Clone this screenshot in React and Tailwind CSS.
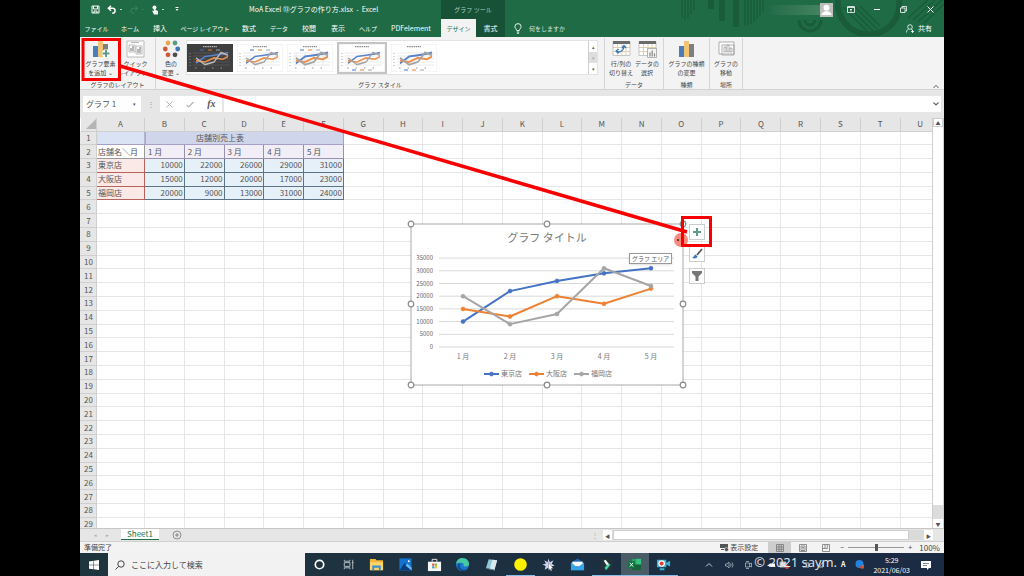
import React from 'react';

const JP = "font-['Noto_Sans_CJK_JP',sans-serif]";
const MONTHS = ['1 月', '2 月', '3 月', '4 月', '5 月'];
const SHOPS = [
    { name: '東京店', color: '#4472c4', values: [10000, 22000, 26000, 29000, 31000] },
    { name: '大阪店', color: '#ed8133', values: [15000, 12000, 20000, 17000, 23000] },
    { name: '福岡店', color: '#a5a5a5', values: [20000, 9000, 13000, 31000, 24000] },
];
const COLUMNS = 'ABCDEFGHIJKLMNOPQRSTU'.split('');
const EMPTY_ROWS = Array.from({ length: 24 }, (_, i) => i + 6);

const TABS = [
    { label: 'ファイル', cls: 'w-[33px] text-[6px]' },
    { label: 'ホーム', cls: 'w-[34px] text-[6px]' },
    { label: '挿入', cls: 'w-[26px] text-[7px]' },
    { label: 'ページ レイアウト', cls: 'w-[64px] text-[6px]' },
    { label: '数式', cls: 'w-[24px] text-[7px]' },
    { label: 'データ', cls: 'w-[36px] text-[6px]' },
    { label: '校閲', cls: 'w-[24px] text-[7px]' },
    { label: '表示', cls: 'w-[34px] text-[7px]' },
    { label: 'ヘルプ', cls: 'w-[26px] text-[6px]' },
    { label: 'PDFelement', cls: 'w-[60px] text-[7px]' },
];

const Decoration = () => (
    <svg className="absolute right-0 top-0 h-9 w-[264px]" viewBox="0 0 264 36" fill="none" stroke="#1a5c3a" aria-hidden="true">
        <g strokeWidth="1.4">
            <path d="M2 0v18M5 0v20M8 0v18M11 0v14M14 0v10M65 0v26M68 0v26M71 0v24M74 0v22M77 0v19M80 0v16M83 0v12" />
        </g>
        <g strokeWidth="6">
            <path d="M42 0v21M56 0v27M31 0v9" />
            <path d="M158 0a31 31 0 0 0 54 24a31 31 0 0 0 7-24" />
        </g>
        <path d="M119 20a11 11 0 0 0 22 0M125 20a5 5 0 0 0 10 0" strokeWidth="3" />
        <path d="M163 7l25 25M168 6l25 25M174 6l23 23M180 6l20 20M228 18l20-18M233 20l22-20M238 22l24-22M243 24l21-20" strokeWidth="1.6" />
    </svg>
);

const QuickIcons = () => (
    <div className="flex w-[106px] items-center gap-[7px] pl-[11px] text-white">
        <button aria-label="保存">
            <svg className="h-[9px] w-[9px]" viewBox="0 0 9 9" fill="none" stroke="currentColor"><path d="M1 1h7v7H1zM2.500 1v3h4V1M3 8V6h3v2" /></svg>
        </button>
        <button aria-label="元に戻す">
            <svg className="h-[9px] w-[16px]" viewBox="0 0 16 9" fill="none" stroke="currentColor"><path d="M4 .8L1.300 3.300L4 5.800M1.500 3.300h4.200a2.400 2.400 0 0 1 0 4.800H5" strokeWidth="1.400" /><path d="M13 4l1 1 1-1" strokeWidth=".7" /></svg>
        </button>
        <button aria-label="やり直し" className="text-[#3e8560]">
            <svg className="h-[9px] w-[14px]" viewBox="0 0 14 9" fill="none" stroke="currentColor"><path d="M5 .8l2.700 2.500L5 5.800M7.500 3.300H3.300a2.400 2.400 0 0 0 0 4.800H4" /><path d="M12 4l1 1 1-1" strokeWidth=".7" /></svg>
        </button>
        <button aria-label="タッチ/マウス モードの切り替え">
            <svg className="h-[10px] w-[16px]" viewBox="0 0 16 10"><circle cx="3.500" cy="2.500" r="2" fill="currentColor" /><path d="M3 2v4L1 5.500 3 9.500h4V6L4.500 5V2z" fill="currentColor" /><path d="M11 4l1 1 1-1" fill="none" stroke="currentColor" strokeWidth=".7" /></svg>
        </button>
        <button aria-label="カスタマイズ" className="flex">
            <svg className="h-[5px] w-[6px]" viewBox="0 0 6 5"><path d="M1.500 0h3v1h-3zM1.500 2h3L3 4z" fill="currentColor" /></svg>
        </button>
    </div>
);

const TitleBar = () => (
    <div className="flex h-[19px] items-stretch">
        <QuickIcons />
        <div className="w-[255px] pl-[63px] pt-[4px] text-[7px] leading-[11px] text-white whitespace-nowrap">MoA Excel ⑬グラフの作り方.xlsx&nbsp; -&nbsp; Excel</div>
        <div className="w-[64px] bg-[#175236] text-center text-[6px] leading-[19px] text-[#b5cfc0]">グラフ ツール</div>
        <div className="relative flex flex-1 items-center justify-end text-white">
            <div className="h-[10px] w-[49px] bg-gradient-to-r from-[#256c4b] to-[#43835f]" />
            <svg className="mr-[14px] h-[14px] w-[13px]" viewBox="0 0 13 14" aria-label="アカウント"><path fill="#bcc0bd" d="M0 0h13v14H0z" /><circle cx="6.500" cy="4.800" r="3" fill="#fff" /><path d="M1.500 12c0-5 10-5 10 0z" fill="#fff" /></svg>
            <button aria-label="リボンの表示オプション" className="mr-[19px]">
                <svg className="h-[7px] w-[8px]" viewBox="0 0 8 7" fill="none" stroke="currentColor" strokeWidth=".8"><path d="M.5.5h7v6h-7zM.5 1.500h7M4 5.500V3M3 4l1-1 1 1" /></svg>
            </button>
            <button aria-label="最小化" className="mr-[20px] h-px w-[6px] bg-white" />
            <button aria-label="元のサイズに戻す" className="mr-[20px]">
                <svg className="h-[7px] w-[7px]" viewBox="0 0 7 7" fill="none" stroke="currentColor" strokeWidth=".8"><path d="M.5 2h4.500v4.500H.5zM2 2V.5h4.500V5H5" /></svg>
            </button>
            <button aria-label="閉じる" className="mr-[10px]">
                <svg className="h-[7px] w-[7px]" viewBox="0 0 7 7" stroke="currentColor"><path d="M.5.5l6 6M6.500.5l-6 6" /></svg>
            </button>
        </div>
    </div>
);

const TabBar = () => (
    <div className="flex h-[18px] items-stretch text-white whitespace-nowrap">
        {TABS.map((tab) => (
            <button key={tab.label} className={`${tab.cls} text-center`}>{tab.label}</button>
        ))}
        <button className="w-[35px] bg-[#f3f3f3] text-[6px] text-[#217346]">デザイン</button>
        <button className="w-[29px] bg-[#175236] text-[7px]">書式</button>
        <div className="relative flex flex-1 items-center">
            <svg className="ml-[9px] h-[11px] w-[8px]" viewBox="0 0 8 11" fill="none" stroke="currentColor" strokeWidth=".9"><path d="M2.700 7.500C2.700 6 .9 5.500.9 3.700a3.100 3.100 0 0 1 6.200 0C7.100 5.500 5.300 6 5.300 7.500zM2.700 9h2.600M3 10.300h2" /></svg>
            <button className="ml-[7px] text-[6px] text-[#d5e5dc]">何をしますか</button>
            <button className="ml-auto mr-3 flex items-center gap-[4px] text-[7px]">
                <svg className="h-[9px] w-[8px]" viewBox="0 0 8 9" fill="none" stroke="currentColor" strokeWidth=".8"><circle cx="4" cy="3" r="2.300" /><path d="M.5 8.500c0-2 1-3 2-3.400M5.500 5l1 1.500M5 7.500h3M6.500 6v3" /></svg>
                共有
            </button>
        </div>
    </div>
);

const Thumb = ({ dark, selected, markers, wide }) => {
    const grid = dark ? '#636363' : '#dcdcdc';
    const lines = [
        ['#5b83c9', '9,18 18,13 27,12 36,11 41,10'],
        ['#ed8f4d', '9,16 18,17 27,14 36,15 41,13'],
        [dark ? '#bbb' : '#a5a5a5', '9,14 18,19 27,17 34,10 41,12'],
    ];
    return (
        <button aria-label="グラフ スタイル" className={selected ? 'border-2 border-[#c4c4c4]' : ''}>
            <svg className="h-[28px] w-[46px]" viewBox="0 0 46 28" fill="none">
                <path fill={dark ? '#3f3f3f' : '#fff'} stroke={dark ? '#3f3f3f' : '#e3e3e3'} strokeWidth=".7" d="M0 0h46v28H0z" />
                <path d="M16 2.700h14" stroke={dark ? '#bbb' : '#888'} strokeWidth="1.200" strokeDasharray="1.500 .7" />
                <path d="M6 9h37M6 12h37M6 15h37M6 18h37M6 21h37" stroke={grid} strokeWidth=".6" />
                {markers && <path d="M9 9v12M18 9v12M27 9v12M36 9v12" stroke={grid} strokeWidth=".6" />}
                <path d="M3 9v13" stroke="#999" strokeWidth="1.200" strokeDasharray=".8 2.200" />
                <path d="M8 24h34" stroke="#999" strokeDasharray="1.500 7" />
                {lines.map(([color, points]) => (
                    <polyline key={color} points={points} stroke={color} strokeWidth={wide || markers ? 1.5 : 1.2} transform="translate(0 -5) scale(1 1.35)" />
                ))}
                <path d={selected || wide ? 'M13 26h4' : 'M13 6h4'} stroke="#4472c4" />
                <path d={selected || wide ? 'M21 26h4' : 'M21 6h4'} stroke="#ed7d31" />
                <path d={selected || wide ? 'M29 26h4' : 'M29 6h4'} stroke="#a5a5a5" />
            </svg>
        </button>
    );
};

const BarsIcon = ({ plus }) => (
    <svg className="h-[18px] w-[19px]" viewBox="0 0 19 18">
        <path fill="#4a7ebb" d="M2 6h5v11H2z" />
        <path fill="#f0c674" d="M7 1h5v16H7z" />
        <path fill="#7f7f7f" d={plus ? 'M12 4h5v6h-5z' : 'M12 4h5v13h-5z'} />
        {plus && <path d="M11 13.500h8M15 9.500v8" stroke="#fff" strokeWidth="4" />}
        {plus && <path d="M11.500 13.500h7M15 10v7" stroke="#5c9c85" strokeWidth="1.900" />}
    </svg>
);

const SheetIcon = ({ select }) => (
    <svg className="h-[18px] w-[19px]" viewBox="0 0 19 18" fill="none">
        <path fill="#fff" stroke="#b0b0b0" strokeWidth=".7" d="M1 1.500h17v14H1z" />
        <path fill="#6b6b6b" d="M1 1h17v3H1z" />
        <path d="M1 7.500h17M1 11.500h17M5.500 4v11.500M10 4v11.500M14 4v11.500" stroke="#d9c69b" strokeWidth=".8" />
        {select ? (
            <g><path fill="#f3f3f3" stroke="#999" strokeWidth=".7" d="M9.500 8.500h9v9h-9z" /><path d="M12 16.500v-4M14.200 16.500v-6M16.500 16.500v-3" stroke="#888" strokeWidth="1.200" /></g>
        ) : (
            <path d="M5 11.500c3 1.500 7-1 7-5.500M3.700 11l3-1.800M4 11.200l2.500 2M10 8l2-2.400L14 8" stroke="#3576b9" strokeWidth="1.300" />
        )}
    </svg>
);

const MoveIcon = () => (
    <svg className="h-[18px] w-[19px]" viewBox="0 0 19 18" fill="#fff" stroke="#999" strokeWidth=".8">
        <path d="M2 2h15v12H2zM5 5h12v10H5z" /><path d="M7 12V7h2v5zM10 12V5h2v7zM13 12V8h2v4z" />
    </svg>
);

const LayoutIcon = () => (
    <svg className="h-[18px] w-[19px]" viewBox="0 0 19 18" fill="#fff" stroke="#aaa" strokeWidth=".8">
        <path d="M1 1h17v16H1z" /><path d="M5 2.500h8M3 5h6v7H3zM10 6h6v8h-6z" /><path d="M5 11V8M7 11V6M12 13V9M14 13V7" stroke="#888" strokeWidth="1.200" />
    </svg>
);

const PaletteIcon = () => (
    <svg className="h-[18px] w-[19px]" viewBox="0 0 19 18">
        <circle cx="6" cy="3" r="2.400" fill="#e8a94c" /><circle cx="13" cy="3" r="2.400" fill="#5c9c85" /><circle cx="3.300" cy="9" r="2.400" fill="#d05a35" />
        <circle cx="15.700" cy="9" r="2.400" fill="#3b78b5" /><circle cx="6" cy="14.800" r="2.400" fill="#d05a35" /><circle cx="13" cy="14.800" r="2.400" fill="#4d4d4d" />
    </svg>
);

const Tool = ({ icon, top, bottom, cls }) => (
    <button className={`${cls} flex flex-col items-center text-center`}>
        {icon}
        <span className="mt-[1px] block text-[6px] leading-[9px] whitespace-nowrap">{top}<br />{bottom}</span>
    </button>
);

const Group = ({ label, cls, children }) => (
    <section className={`${cls} flex h-[51px] flex-col justify-between border-r border-[#d5d5d5]`}>
        <div className="flex items-start justify-center pt-[2px]">{children}</div>
        <div className="text-center text-[6px] leading-[9px]">{label}</div>
    </section>
);

const Ribbon = () => (
    <div className="flex h-[53px] items-start border-b border-[#d2d2d2] bg-[#f3f3f3] pt-[1px] text-[#444]">
        <Group label="グラフのレイアウト" cls="w-[76px]">
            <Tool icon={<BarsIcon plus />} top="グラフ要素" bottom="を追加 ⌄" cls="w-[36px]" />
            <Tool icon={<LayoutIcon />} top="クイック" bottom="レイアウト ⌄" cls="w-[34px]" />
        </Group>
        <Group label="グラフ スタイル" cls="flex-1">
            <Tool icon={<PaletteIcon />} top="色の" bottom="変更 ⌄" cls="w-[30px]" />
            <div className="flex h-[35px] flex-1 items-center gap-[4px] border border-[#e3e3e3] bg-white">
                <Thumb dark />
                <Thumb />
                <Thumb markers />
                <Thumb selected />
                <Thumb wide />
                <div className="ml-auto grid h-full w-[9px] grid-rows-3 border-l border-[#d0d0d0] text-[5px] leading-none text-[#666]">
                    <button aria-label="上へ">▴</button>
                    <button aria-label="下へ" className="bg-[#dedede] text-[#aaa]">▾</button>
                    <button aria-label="その他">▾</button>
                </div>
            </div>
            <div className="w-[6px]" />
        </Group>
        <Group label="データ" cls="w-[59px]">
            <Tool icon={<SheetIcon />} top="行/列の" bottom="切り替え" cls="w-[26px]" />
            <Tool icon={<SheetIcon select />} top="データの" bottom="選択" cls="w-[26px]" />
        </Group>
        <Group label="種類" cls="w-[46px]">
            <Tool icon={<BarsIcon />} top="グラフの種類" bottom="の変更" cls="w-[40px]" />
        </Group>
        <Group label="場所" cls="w-[33px]">
            <Tool icon={<MoveIcon />} top="グラフの" bottom="移動" cls="w-[30px]" />
        </Group>
        <div className="flex h-[51px] w-[201px] items-end justify-end pr-[5px]">
            <button aria-label="リボンを折りたたむ">
                <svg className="h-[5px] w-[6px]" viewBox="0 0 6 5" fill="none" stroke="#666"><path d="M.5 4L3 1.200 5.500 4" /></svg>
            </button>
        </div>
    </div>
);

const FormulaBar = () => (
    <div className="flex h-[28px] items-start pt-[6px] pl-[3px] pr-[3px] text-[#555]">
        <div className="flex h-[16px] w-[58px] items-center bg-white">
            <input aria-label="名前ボックス" defaultValue="グラフ 1" className="w-[50px] bg-transparent pl-[3px] text-[8px] leading-[12px] outline-none" />
            <button aria-label="名前の一覧" className="text-[5px]">▾</button>
        </div>
        <div className="w-[19px] text-center text-[8px] leading-[15px] text-[#999]">⋮</div>
        <div className="flex h-[16px] w-[62px] items-center justify-around bg-white">
            <button aria-label="キャンセル"><svg className="h-[7px] w-[7px]" viewBox="0 0 7 7" stroke="#b5b5b5"><path d="M.5.5l6 6M6.500.5l-6 6" /></svg></button>
            <button aria-label="入力"><svg className="h-[7px] w-[8px]" viewBox="0 0 8 7" fill="none" stroke="#b5b5b5" strokeWidth="1.200"><path d="M.5 4l2.200 2L7.500 1" /></svg></button>
            <button className="font-['Liberation_Serif',serif] text-[10px] font-bold italic leading-none">fx</button>
        </div>
        <div className="ml-[2px] flex h-[16px] flex-1 items-center bg-white pr-[2px]">
            <input aria-label="数式バー" className="min-w-0 flex-1 bg-transparent text-[8px] outline-none" />
            <button aria-label="数式バーの展開"><svg className="h-[4px] w-[6px]" viewBox="0 0 6 4" fill="none" stroke="#666" strokeWidth="1.200"><path d="M.5.5L3 3 5.500.5" /></svg></button>
        </div>
    </div>
);

const RowHead = ({ n }) => (
    <th scope="row" className="border border-[#cfcfcf] border-l-[#e6e6e6] bg-[#e6e6e6] p-0 font-normal text-[#555]">{n}</th>
);

const Sheet = () => (
    <table className="h-[414px] w-[101%] table-fixed border-collapse text-[8px] leading-[10px] text-[#555] whitespace-nowrap">
        <colgroup>
            <col className="w-[16px]" />
            <col className="w-[48px]" />
            {COLUMNS.slice(1).map((c) => <col key={c} />)}
        </colgroup>
        <thead>
            <tr className="h-[13px] bg-[#e6e6e6]">
                <th className="p-0" aria-label="すべて選択"><svg className="ml-[5px] h-[10px] w-[10px]" viewBox="0 0 10 10"><path d="M10 0v10H0z" fill="#b5b5b5" /></svg></th>
                {COLUMNS.map((c) => (
                    <th key={c} scope="col" className="border-x border-b border-[#cfcfcf] p-0 font-normal">{c}</th>
                ))}
            </tr>
        </thead>
        <tbody>
            <tr>
                <RowHead n={1} />
                <td colSpan={6} className="border border-[#a79fc4] bg-[linear-gradient(to_right,#dae3f3_47px,#8c7fb0_47px,#8c7fb0_48px,#cfd5ea_48px)] p-0 text-center">店舗別売上表</td>
                {COLUMNS.slice(6).map((c) => <td key={c} className="border border-[#e6e6e6] p-0" />)}
            </tr>
            <tr>
                <RowHead n={2} />
                <td className="border border-[#999] bg-white p-0 pl-px">店舗名＼月</td>
                {MONTHS.map((m) => <td key={m} className="border border-[#9a8fac] bg-[#f2eef8] p-0 pl-[3px]">{m}</td>)}
                {COLUMNS.slice(6).map((c) => <td key={c} className="border border-[#e6e6e6] p-0" />)}
            </tr>
            {SHOPS.map((shop, i) => (
                <tr key={shop.name}>
                    <RowHead n={i + 3} />
                    <td className="border border-[#b5645c] bg-[#fbe9e7] p-0 pl-px">{shop.name}</td>
                    {shop.values.map((v) => <td key={v} className="border border-[#5c7388] bg-[#e6f0f8] p-0 pr-px text-right">{v}</td>)}
                    {COLUMNS.slice(6).map((c) => <td key={c} className="border border-[#e6e6e6] p-0" />)}
                </tr>
            ))}
            {EMPTY_ROWS.map((n) => (
                <tr key={n}>
                    <RowHead n={n} />
                    {COLUMNS.map((c) => <td key={c} className="border border-[#e6e6e6] p-0" />)}
                </tr>
            ))}
        </tbody>
    </table>
);

const px = (i) => 52 + i * 47;
const py = (v) => 123 - (v / 5000) * 12.7;

const Chart = () => (
    <svg className="absolute left-[327px] top-[102px] h-[169px] w-[280px]" viewBox="-4 -4 280 169" fill="none" role="img" aria-label="グラフ タイトル">
        <path d="M0 0h272v161H0z" fill="#fff" stroke="#a8a8a8" />
        <text x="136" y="18" textAnchor="middle" fontSize="11" fill="#777">グラフ タイトル</text>
        {[0, 5000, 10000, 15000, 20000, 25000, 30000, 35000].map((v) => (
            <g key={v}>
                <path d={`M28 ${py(v)}h235`} stroke="#d9d9d9" />
                <text x="22" y={py(v) + 2} textAnchor="end" fontSize="6" fill="#666">{v}</text>
            </g>
        ))}
        {MONTHS.map((m, i) => <text key={m} x={px(i)} y="135" textAnchor="middle" fontSize="7" fill="#777">{m}</text>)}
        {SHOPS.map((shop, s) => (
            <g key={shop.name} stroke={shop.color} fill={shop.color}>
                <polyline points={shop.values.map((v, i) => `${px(i)},${py(v)}`).join(' ')} fill="none" strokeWidth="2" strokeLinejoin="round" />
                {shop.values.map((v, i) => <circle key={v} cx={px(i)} cy={py(v)} r="2" strokeWidth=".6" />)}
                <path d={`M${73 + s * 45} 150h15`} strokeWidth="2" />
                <circle cx={80.5 + s * 45} cy="150" r="2" strokeWidth=".6" />
                <text x={90 + s * 45} y="152" fontSize="7" stroke="none" fill="#777">{shop.name}</text>
            </g>
        ))}
        {[[0, 0], [136, 0], [272, 0], [0, 80], [272, 80], [0, 161], [136, 161], [272, 161]].map(([x, y]) => (
            <circle key={`${x}-${y}`} cx={x} cy={y} r="2.800" fill="#fff" stroke="#8a8a8a" strokeWidth="1.200" />
        ))}
    </svg>
);

const ChartButtons = () => (
    <div className="absolute left-[609px] top-[106px] flex flex-col gap-[6px]">
        <button aria-label="グラフ要素" className="h-[16px] w-[16px] border border-[#ccc] bg-white"><svg viewBox="0 0 14 14"><path d="M3 7h8M7 3v8" stroke="#5c9c85" strokeWidth="2" /></svg></button>
        <button aria-label="グラフ スタイル" className="h-[16px] w-[16px] border border-[#ccc] bg-white"><svg viewBox="0 0 14 14"><path d="M12 2L7 8" stroke="#555" strokeWidth="1.800" /><path d="M7.500 9.500L5.500 7.500C4 8 4.500 10 2 11c3 1 5.500 0 5.500-1.500z" fill="#3b78b5" /></svg></button>
        <button aria-label="グラフ フィルター" className="h-[16px] w-[16px] border border-[#ccc] bg-white"><svg viewBox="0 0 14 14"><path d="M2 2h10v2L8.500 7.500V12h-3V7.500L2 4z" fill="#777" /></svg></button>
    </div>
);

const Workspace = () => (
    <div className="flex min-h-0 flex-1 bg-[#e6e6e6]">
        <div className="relative min-w-0 flex-1 overflow-hidden bg-white">
            <Sheet />
            <Chart />
            <ChartButtons />
            <div role="tooltip" className="absolute left-[549px] top-[135px] border border-[#999] bg-white px-[2px] text-[6px] leading-[9px] text-[#555] shadow-sm whitespace-nowrap">グラフ エリア</div>
        </div>
        <div className="flex w-[12px] flex-col border-x border-[#cfcfcf] bg-[#dcdcdc] text-[5px] text-[#555]">
            <button aria-label="上へスクロール" className="h-[9px] border border-[#cfcfcf] bg-white leading-none">▲</button>
            <div className="flex-1 bg-white" />
            <div className="h-[14px]" />
            <button aria-label="下へスクロール" className="h-[9px] bg-white leading-none">▼</button>
        </div>
    </div>
);

const SheetTabs = () => (
    <div className="flex h-[13px] items-start border-t border-[#c6c6c6] bg-[#e6e6e6] text-[8px] text-[#aaa]">
        <button aria-label="前のシート" className="ml-[9px] w-[12px] text-[5px] leading-[11px]">◂</button>
        <button aria-label="次のシート" className="w-[12px] text-[5px] leading-[11px]">▸</button>
        <button className="ml-[8px] w-[38px] border-b border-[#217346] bg-white leading-[10px] text-[#217346]">Sheet1</button>
        <button aria-label="新しいシート" className="ml-[13px] mt-px">
            <svg className="h-[10px] w-[10px]" viewBox="0 0 10 10" fill="none" stroke="#777" strokeWidth=".8"><circle cx="5" cy="5" r="4" /><path d="M3 5h4M5 3v4" /></svg>
        </button>
        <span className="ml-auto mr-[4px] leading-[11px]">⋮</span>
        <div className="mr-[11px] mt-px flex h-[10px] w-[330px] gap-px bg-[#dadada] text-[5px] leading-none text-[#555]">
            <button aria-label="左へスクロール" className="w-[9px] bg-white">◀</button>
            <div className="flex-1 border border-[#cfcfcf] bg-white" />
            <div className="w-[13px]" />
            <button aria-label="右へスクロール" className="w-[9px] bg-white">▶</button>
        </div>
    </div>
);

const StatusBar = () => (
    <div className="flex h-[12px] items-center border-t border-[#d0d0d0] bg-[#f3f3f3] text-[7px] leading-[11px] text-[#444]">
        <span className="ml-[4px]">準備完了</span>
        <button className="ml-auto mr-[10px] flex items-center gap-px">
            <svg className="h-[8px] w-[9px]" viewBox="0 0 9 8"><path d="M0 0h8v4H0zM1 5h3v1H1z" fill="#555" /><circle cx="6.500" cy="5.500" r="2" fill="#555" stroke="#f3f3f3" strokeWidth=".5" /></svg>
            表示設定
        </button>
        <button aria-label="標準" className="flex h-full w-[23px] items-center justify-center bg-[#cdcdcd]"><svg className="h-[8px] w-[8px]" viewBox="0 0 8 8" fill="none" stroke="#777" strokeWidth=".8"><path d="M.5.5h7v7h-7zM.5 3h7M.5 5.300h7M3 .5v7M5.300.5v7" /></svg></button>
        <button aria-label="ページ レイアウト" className="flex w-[23px] justify-center"><svg className="h-[8px] w-[8px]" viewBox="0 0 8 8" fill="none" stroke="#777" strokeWidth=".8"><path d="M.5.5h7v7h-7zM2 2h4v4.500H2zM3 3.500h2M3 5h2" /></svg></button>
        <button aria-label="改ページ プレビュー" className="flex w-[23px] justify-center"><svg className="h-[8px] w-[8px]" viewBox="0 0 8 8" fill="none" stroke="#777" strokeWidth=".8"><path d="M.5.5h7v7h-7zM3 .5v4M5.300.5v4M.5 4.500h4.800" /></svg></button>
        <button aria-label="縮小" className="ml-[2px] w-[6px]">−</button>
        <input type="range" aria-label="ズーム" defaultValue={50} className="mx-[3px] h-px w-[56px] appearance-none bg-[#999] [&::-webkit-slider-thumb]:h-[7px] [&::-webkit-slider-thumb]:w-[3px] [&::-webkit-slider-thumb]:appearance-none [&::-webkit-slider-thumb]:bg-[#555]" />
        <button aria-label="拡大" className="w-[6px]">+</button>
        <span className="ml-[6px] mr-[4px] text-[8px]">100%</span>
    </div>
);

const APPS = [
    { name: 'Cortana', art: <circle cx="8" cy="8" r="4.500" fill="none" stroke="#fff" strokeWidth="1.800" /> },
    { name: 'タスク ビュー', art: <path d="M3.500 3v1.500h6V3M3.500 13v-1.500h6V13M3.500 6h6v4h-6zM12.500 3v10M11.500 6h2" fill="none" stroke="#b7c0c5" /> },
    { name: 'エクスプローラー', art: <g><path d="M1 2h6l1 1.500h7V14H1z" fill="#f3b73c" /><path d="M1 5.500h14V14H1z" fill="#fcd468" /><path d="M3.500 9h9v5h-2v-2.500h-5V14h-2z" fill="#3c8fd0" /></g> },
    { name: 'フォト', art: <g><path d="M1.500 1.500h13v13h-13z" fill="#1473cf" /><path d="M1.500 14.500l5.500-8 7.500 8z" fill="#0b3d7c" /><path d="M8 9l2-2 4.500 4.500v3z" fill="#69b9f2" /><circle cx="11.500" cy="4.500" r="1" fill="#fff" /></g> },
    { name: 'Microsoft Store', art: <g><path d="M5.500 5V2.500h5V5" fill="none" stroke="#eee" /><path d="M1 5h14v10H1z" fill="#f5f5f5" /><path d="M5.500 7h2.300v2.300H5.500z" fill="#e6522c" /><path d="M8.300 7h2.300v2.300H8.300z" fill="#7db72f" /><path d="M5.500 9.800h2.300v2.300H5.500z" fill="#2ba0df" /><path d="M8.300 9.800h2.300v2.300H8.300z" fill="#f6b912" /></g> },
    { name: 'Edge', art: <g><circle cx="8" cy="8" r="7" fill="#1b78c8" /><path d="M1.200 7C2 2 6 1 8 1c4 0 7 3 7 6.500 0 3-5 3.500-6 1.500 1-1.500-.5-3-3-3-2 0-4 .5-4.800 1z" fill="#45c9a0" /><path d="M6 7c-2 2-1 6 3 6.500 2 .2 4-.5 5-1.500-2 4-8 4-11 0C2 9 4 7 6 7z" fill="#144a8c" /></g> },
    { name: 'メモ帳', art: <g><path d="M5 2.500l9 1-3 10.500-9-2z" fill="#8ec7d8" /><path d="M9 3l5 .5-3 10.500-5-1z" fill="#d8e9ec" /><path d="M2 12l9 2" stroke="#4b6d77" /></g> },
    { name: 'ペン', active: true, art: <circle cx="8" cy="8" r="6.700" fill="#fff200" /> },
    { name: 'ポインター', art: <g><path d="M8 1.500l1.300 4 4-2-1.800 3.800 3 2-4 .7.500 4-3.300-2.500L4 13.500l1-4L1.500 8l3.700-.8L3.500 3.500l3.500 2z" fill="#cdd2ef" /><path d="M8 6l5 6-2.300.2 1 2.300-1.200.5-1-2.300L8 14z" fill="#fff" stroke="#445" strokeWidth=".4" /></g> },
    { name: 'メール', art: <g><path d="M1 6l7-4.500L15 6v8H1z" fill="#1a67b5" /><path d="M2.500 5h11v5h-11z" fill="#fff" /><path d="M1 6l7 5 7-5v8H1z" fill="#36a5e8" /></g> },
    { name: 'Filmora', active: true, art: <g><path d="M1.500 1.500h13v13h-13z" fill="#253238" /><path d="M5 4l2-1 4 5-2 2z" fill="#e7fff8" /><path d="M6 11.500L9 8h3.500l-5 6z" fill="#42d5b2" /></g> },
    { name: 'Excel', active: true, open: true, art: <g><path d="M5 2h10v12H5z" fill="#27a165" /><path d="M10 2h5v6h-5z" fill="#35c481" /><path d="M5 8h10v6H5z" fill="#17633b" /><path d="M1 4.500h7.500v7.500H1z" fill="#0f7540" /><path d="M3 6.200l3.500 4M6.500 6.200l-3.500 4" stroke="#fff" /></g> },
    { name: '録画', active: true, art: <g><path d="M1 3h10v8H1zM11 6l4-2v6l-4-2zM4 12h5v2H4z" fill="#39b3d3" /><circle cx="6" cy="7" r="3.500" fill="#fff" /><circle cx="6" cy="7" r="2.200" fill="#e04336" /></g> },
];

const Taskbar = () => (
    <div className="relative flex h-[23px] items-stretch bg-gradient-to-r from-[#1f353e] to-[#1b2b44] text-white">
        <button aria-label="スタート" className="flex w-[28px] items-center justify-center">
            <svg className="h-[10px] w-[10px]" viewBox="0 0 10 10"><path d="M0 1.400l4.500-.6v4H0zM5 .7L10 0v4.800H5zM0 5.300h4.500v4L0 8.700zM5 5.300h5V10l-5-.7z" fill="#fff" /></svg>
        </button>
        <label className="flex w-[197px] items-center gap-[6px] bg-[#f2f2f2] pl-[7px]">
            <svg className="h-[10px] w-[10px]" viewBox="0 0 10 10" fill="none" stroke="#444"><circle cx="6" cy="4" r="3.200" /><path d="M3.700 6.300L.5 9.500" /></svg>
            <input aria-label="検索" placeholder="ここに入力して検索" className="w-[150px] bg-transparent text-[8px] outline-none placeholder:text-[#444]" />
        </label>
        <nav className="grid w-[373px] grid-cols-13">
            {APPS.map((app) => (
                <button key={app.name} aria-label={app.name} className={`flex items-center justify-center border-b ${app.active ? 'border-[#86bfe8]' : 'border-transparent'} ${app.open ? 'bg-[#4a5c66]' : ''}`}>
                    <svg className="h-[15px] w-[15px]" viewBox="0 0 16 16">{app.art}</svg>
                </button>
            ))}
        </nav>
        <div className="flex flex-1 items-center justify-end">
            <svg className="mr-[12px] h-[8px] w-[8px]" viewBox="0 0 8 8" fill="none" stroke="#c5ccd5"><path d="M1 5.500l3-3 3 3" /></svg>
            <svg className="mr-[11px] h-[8px] w-[9px]" viewBox="0 0 9 8" fill="none" stroke="#aab5c0" strokeWidth=".8"><path d="M.5 3h1.500L4 1v6L2 5H.5zM5.500 2.500q1 1.500 0 3M7 1.500q2 2.500 0 5" /></svg>
            <svg className="mr-[13px] h-[8px] w-[7px]" viewBox="0 0 7 8" fill="none" stroke="#aab5c0" strokeWidth=".8"><path d="M.5 2h4v4h-4zM4.500 3l2-1v4l-2-1M1 .5h3M1 7.500h3" /></svg>
            <svg className="mr-[6px] h-[10px] w-[70px]" viewBox="0 0 70 10" fill="none" stroke="#aab5c0"><path d="M2 6h8V3.500H5z" fill="#fff" stroke="none" /><path d="M15 2h6v5h-6z" fill="#ddd" /><circle cx="22" cy="7" r="2" fill="#e04336" stroke="none" /><path d="M38 3h6v4h-6M54 7l4-5v5z" /></svg>
            <span className="mr-[10px] text-[7px] font-bold leading-none">A</span>
            <svg className="mr-[9px] h-[9px] w-[9px]" viewBox="0 0 9 9"><circle cx="4.500" cy="4" r="4" fill="#2383e2" /><path d="M5 8l3.500-3.500v4z" fill="#f2b04b" /><circle cx="6.500" cy="7" r="1.500" fill="#d7462e" /></svg>
            <time className="mr-[11px] text-center text-[7px] leading-[10px]">5:29<br />2021/06/03</time>
            <svg className="mr-[13px] h-[10px] w-[10px]" viewBox="0 0 10 10"><path d="M0 1h10v7H8L6 10V8H0z" fill="#fff" /><path d="M2 3.500h6M2 5.500h4" stroke="#7b8795" /></svg>
        </div>
        <span className="absolute right-[107px] top-0 font-['Open_Sans',sans-serif] text-[13px] font-medium leading-[18px] text-[#e4e8ec]">© 2021 saym.</span>
    </div>
);

// 赤枠と矢印線の注釈
const Callout = () => (
    <svg className="pointer-events-none absolute left-0 top-0 h-[260px] w-[640px]" viewBox="0 0 640 260" fill="none" stroke="#f90000">
        <circle cx="601" cy="240" r="7" fill="#fb8a80" stroke="none" />
        <circle cx="598" cy="240" r="1" fill="#222" stroke="none" />
        <circle cx="603" cy="240" r="1" fill="#222" stroke="none" />
        <path d="M40 66L607 232" strokeWidth="3.500" />
        <path d="M3 39.500h36.500v40H3zM602.500 217.500h28v28h-28z" strokeWidth="3" />
    </svg>
);

export default function App() {
    return (
        <div className={`${JP} h-screen bg-black px-20`}>
            <main className="relative flex h-full flex-col overflow-hidden bg-[#e6e6e6]">
                <header className="relative bg-[#1e6b45]">
                    <Decoration />
                    <TitleBar />
                    <TabBar />
                </header>
                <Ribbon />
                <FormulaBar />
                <Workspace />
                <SheetTabs />
                <StatusBar />
                <Taskbar />
                <Callout />
            </main>
        </div>
    );
}
